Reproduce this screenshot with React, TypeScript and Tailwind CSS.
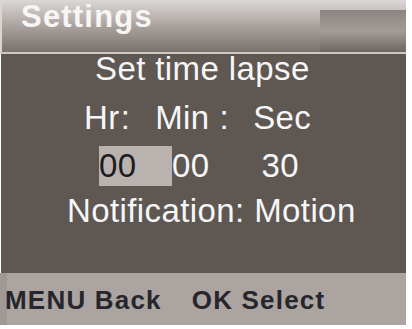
export default function App() {
  const font = { fontFamily: '"Liberation Sans", Arial, "Noto Sans CJK SC", sans-serif' };

  return (
    <div className="w-[412px] h-[329px] bg-white overflow-hidden" style={font}>
      <div className="w-[406px] h-[325px] flex flex-col">
        {/* Title bar */}
        <div className="h-[52px] flex bg-gradient-to-b from-[#dcd8d6] via-[#aaa29e] to-[#7a726d] border-l-2 border-[#d9d5d2]">
          <div className="flex-1 pl-[19px] pt-[1px]">
            <span className="text-[31px] leading-[32px] font-bold text-[#f7f6f5] tracking-[1.2px]">Settings</span>
          </div>
          <div className="w-[86px] mt-[10px] bg-gradient-to-b from-[#8c8480] via-[#a39c98] to-[#6e6661]" />
        </div>
        <div className="h-[2px] bg-[#cdc8c5]" />

        {/* Body */}
        <div className="flex-1 bg-[#5f5852] text-[#f6f6f8] text-[33px] tracking-[0.4px] flex flex-col ml-[1px]">
          <div className="leading-[30px] pl-[94px]">Set time lapse</div>
          <div className="mt-[19px] leading-[30px] flex pl-[83px]">
            <span>Hr</span>
            <span className="ml-[1px]">:</span>
            <span className="ml-[25px]">Min</span>
            <span className="ml-[10px]">:</span>
            <span className="ml-[24px]">Sec</span>
          </div>
          <div className="mt-[13px] h-[40px] leading-[40px] flex pl-[98px]">
            <span className="w-[73px] bg-[#b9b2ae] text-[#1c1c22]">00</span>
            <span>00</span>
            <span className="ml-[52px]">30</span>
          </div>
          <div className="mt-[10px] leading-[30px] pl-[66px]">Notification: Motion</div>
        </div>

        {/* Footer */}
        <div className="h-[52px] bg-[#aba4a0] flex items-center pl-[4px] pt-[2px] text-[26px] font-bold text-[#26262c] tracking-[1.2px] border-l-[7px] border-[#9f9894]">
          <span className="-ml-[6px]">MENU Back</span>
          <span className="ml-[30px]">OK Select</span>
        </div>
      </div>
    </div>
  );
}
